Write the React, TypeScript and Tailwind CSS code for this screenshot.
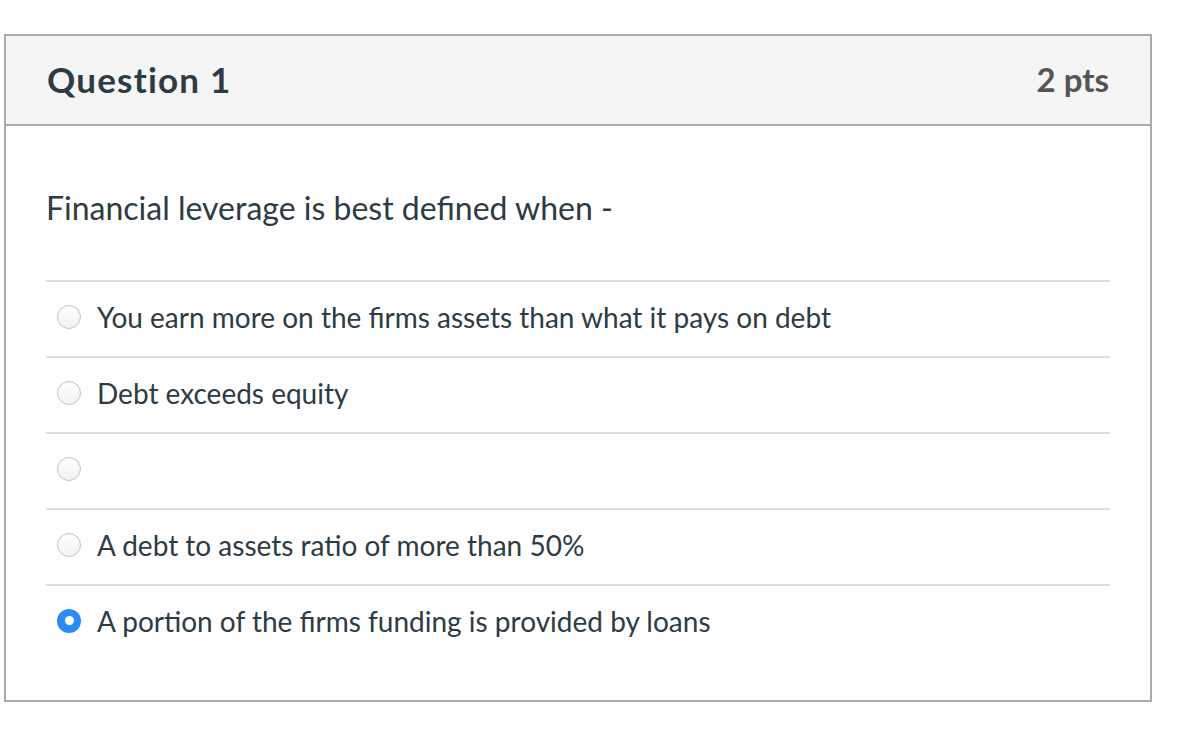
import React from "react"

const answers = [
  { text: "You earn more on the firms assets than what it pays on debt", selected: false },
  { text: "Debt exceeds equity", selected: false },
  { text: "", selected: false },
  { text: "A debt to assets ratio of more than 50%", selected: false },
  { text: "A portion of the firms funding is provided by loans", selected: true },
]

const Radio: React.FC<{ selected: boolean }> = ({ selected }) =>
  selected ? (
    <span className="flex h-[24px] w-[24px] shrink-0 items-center justify-center rounded-full bg-[#2b8bf5]">
      <span className="h-[9px] w-[9px] rounded-full bg-white"></span>
    </span>
  ) : (
    <span className="h-[24px] w-[24px] shrink-0 rounded-full border border-[#c4c4c4] bg-gradient-to-b from-white to-[#f1f1f1] shadow-[inset_0_1px_1px_rgba(0,0,0,0.04)]"></span>
  )

export default function App() {
  return (
    <div
      className="min-h-[752px] w-[1190px] bg-white pl-[4px] pt-[34px]"
      style={{ fontFamily: "Lato, 'Noto Sans', sans-serif" }}
    >
      <div className="w-[1148px] border-2 border-[#aaaaaa] bg-white">
        <div className="flex h-[90px] items-center justify-between border-b-2 border-[#aaaaaa] bg-[#f5f5f5] px-[41px] pb-[2px]">
          <h2 className="text-[35px] font-bold leading-none tracking-[1.2px] text-[#2d3b45]">Question 1</h2>
          <span className="text-[33px] font-bold leading-none text-[#555555]">2 pts</span>
        </div>
        <div className="px-[40px] pb-[40px]">
          <p className="pt-[59px] pb-[50px] text-[32px] leading-[45px] text-[#2d3b45]">
            Financial leverage is best defined when -
          </p>
          <div className="flex flex-col">
            {answers.map((a, i) => (
              <div
                key={i}
                className="flex h-[76px] items-center gap-[16px] border-t-2 border-[#dddddd] pb-[5px] pl-[11px]"
              >
                <Radio selected={a.selected} />
                <span className="text-[28px] leading-none text-[#2d3b45]">{a.text}</span>
              </div>
            ))}
          </div>
        </div>
      </div>
    </div>
  )
}
